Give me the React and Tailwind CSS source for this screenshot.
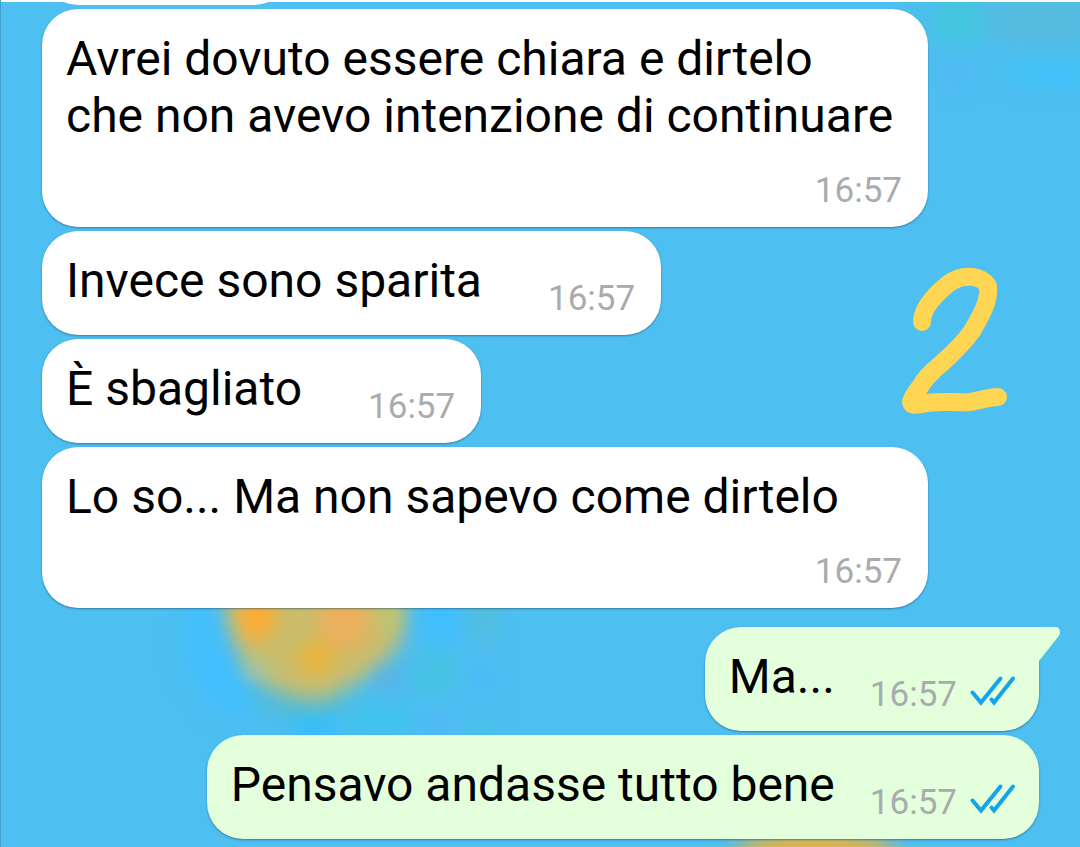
const TEXT = "text-[48px] leading-[57px] text-black";

function Wallpaper() {
  return (
    <div className="pointer-events-none absolute inset-0 overflow-hidden" aria-hidden="true">
      <svg className="absolute left-0 top-0" width="1080" height="847" viewBox="0 0 1080 847">
        <defs>
          <filter id="soft" x="-50%" y="-50%" width="200%" height="200%" colorInterpolationFilters="sRGB">
            <feGaussianBlur stdDeviation="10" />
          </filter>
          <filter id="spot" x="-100%" y="-100%" width="300%" height="300%" colorInterpolationFilters="sRGB">
            <feGaussianBlur stdDeviation="9" />
          </filter>
          <filter id="wide" x="-50%" y="-50%" width="200%" height="200%" colorInterpolationFilters="sRGB">
            <feGaussianBlur stdDeviation="11" />
          </filter>
        </defs>
        <g filter="url(#wide)">
          <ellipse cx="955" cy="20" rx="26" ry="24" fill="#43c6dd" />
          <ellipse cx="1045" cy="20" rx="65" ry="28" fill="#55bbdf" />
          <ellipse cx="1055" cy="72" rx="50" ry="12" fill="#3cc4fb" />
          <ellipse cx="955" cy="72" rx="20" ry="10" fill="#50b8f6" />
          <path d="M184 590L230 590L240 660L262 716L222 716L184 670Z" fill="#42bffd" />
          <ellipse cx="440" cy="618" rx="20" ry="28" fill="#3fbfff" />
          <ellipse cx="434" cy="674" rx="20" ry="20" fill="#44c3df" />
          <ellipse cx="482" cy="618" rx="10" ry="24" fill="#52bed4" />
          <ellipse cx="480" cy="680" rx="14" ry="14" fill="#4cbafa" />
          <ellipse cx="300" cy="700" rx="50" ry="12" fill="#52bccf" />
          <ellipse cx="380" cy="720" rx="34" ry="14" fill="#3dc4ed" />
          <ellipse cx="314" cy="730" rx="26" ry="12" fill="#30beff" />
          <ellipse cx="434" cy="724" rx="20" ry="10" fill="#50b7fb" />
          <ellipse cx="480" cy="724" rx="10" ry="10" fill="#44c4e4" />
        </g>
        <g filter="url(#soft)">
          <path d="M220 570L402 570L400 640Q384 668 356 682L322 700Q288 700 258 680Q224 650 220 570Z" fill="#cabd6c" />
          <ellipse cx="815" cy="866" rx="88" ry="38" fill="#dfb34b" />
        </g>
        <g filter="url(#spot)">
          <ellipse cx="256" cy="616" rx="19" ry="24" fill="#fbad35" />
          <ellipse cx="343" cy="620" rx="26" ry="30" fill="#ebb05e" />
          <ellipse cx="315" cy="658" rx="18" ry="17" fill="#ebb53d" />
          <ellipse cx="388" cy="612" rx="10" ry="24" fill="#bdc773" />
          <ellipse cx="388" cy="678" rx="14" ry="9" fill="#60aee0" />
          <ellipse cx="256" cy="670" rx="14" ry="6" fill="#9fccb0" />
        </g>
      </svg>
    </div>
  );
}

function Ticks() {
  return (
    <svg className="mb-[9px] ml-3 shrink-0" width="46" height="32" viewBox="0 0 46 32" fill="none" stroke="#12a5ea" strokeWidth="4" strokeLinecap="round" role="img" aria-label="Letto">
      <path d="M3.5 17.5L12 27.5L31.5 3.5" />
      <path d="M22.5 24.5L25 27.5L44 3.5" />
    </svg>
  );
}

function Time() {
  return <time className="text-[35px] leading-[42px] text-[#a8acae]">16:57</time>;
}

const BUBBLE = "rounded-[36px] pb-[15px] pl-6 pt-[21px] shadow-[0_1px_2px_rgba(40,80,110,0.6)]";

function Incoming({ children, stacked }) {
  if (stacked) {
    return (
      <li className={`flex w-[886px] max-w-full flex-col items-end gap-[26px] self-start bg-white pr-[26px] ${BUBBLE}`}>
        <p className={`${TEXT} w-full whitespace-nowrap`}>{children}</p>
        <Time />
      </li>
    );
  }
  return (
    <li className={`flex items-end gap-[66px] self-start bg-white pr-[26px] ${BUBBLE}`}>
      <p className={`${TEXT} mb-[11px]`}>{children}</p>
      <Time />
    </li>
  );
}

function Outgoing({ children, tail }) {
  return (
    <li className={`relative flex items-end self-end bg-[#e4ffdb] pr-6 ${BUBBLE} ${tail ? "mt-[15px] rounded-tr-none" : ""}`}>
      {tail && (
        <svg className="absolute -right-[22px] top-0" width="23" height="35" viewBox="0 0 23 35" aria-hidden="true">
          <path d="M0 0H17Q22 0 22 5Q22 8 20 10L1 34H0Z" fill="#e4ffdb" />
        </svg>
      )}
      <p className={`${TEXT} mb-[11px] mr-[35px]`}>{children}</p>
      <Time />
      <Ticks />
    </li>
  );
}

export default function App() {
  return (
    <main className="relative min-h-screen overflow-hidden border-l border-[#459fcb] bg-[#4dbff0] font-['Roboto',sans-serif]">
      <Wallpaper />
      <div className="relative h-[2px] bg-white" />
      <div className="relative ml-[41px] h-[3px] w-[248px] overflow-hidden">
        <div className="absolute bottom-0 h-20 w-full rounded-[36px] bg-white" />
      </div>
      <ul className="relative mt-1 flex flex-col gap-1 pb-2 pl-[41px] pr-[41px]">
        <Incoming stacked>
          Avrei dovuto essere chiara e dirtelo
          <br />
          che non avevo intenzione di continuare
        </Incoming>
        <Incoming>Invece sono sparita</Incoming>
        <Incoming>È sbagliato</Incoming>
        <Incoming stacked>Lo so... Ma non sapevo come dirtelo</Incoming>
        <Outgoing tail>Ma...</Outgoing>
        <Outgoing>Pensavo andasse tutto bene</Outgoing>
      </ul>
      <svg className="absolute right-[70px] top-[264px]" width="110" height="154" viewBox="900 264 110 154" fill="none" stroke="#ffd653" strokeWidth="18" strokeLinecap="round" strokeLinejoin="round" role="img" aria-label="2">
        <path d="M922 322C922 308 937 293 948 284C956 278 965 276 973 277C980 278 985 281 988 286C990 302 979 319 972 331C963 344 952 354 942 363C933 371 926 376 920 387C915 393 912 398 911 402C912 406 916 405 922 404C938 400 952 403 970 402C980 400 990 397 998 397" />
      </svg>
    </main>
  );
}
